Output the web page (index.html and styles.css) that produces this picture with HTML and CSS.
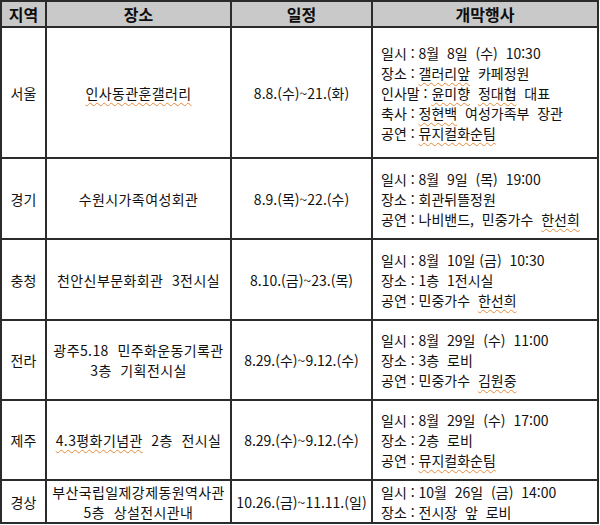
FILE: index.html
```html
<!DOCTYPE html>
<html lang="ko">
<head>
<meta charset="utf-8">
<link rel="stylesheet" href="styles.css">
</head>
<body>
<div class="table">
  <div class="cell head">지역</div>
  <div class="cell head">장소</div>
  <div class="cell head">일정</div>
  <div class="cell head">개막행사</div>

  <div class="cell c">서울</div>
  <div class="cell c loc"><span class="sp">인사동관훈갤러리</span></div>
  <div class="cell c">8.8.(수)~21.(화)</div>
  <div class="cell ev">
    <div>일시 : 8월&nbsp; 8일&nbsp; (수)&nbsp; 10:30</div>
    <div>장소 : <span class="sp">갤러리앞</span>&nbsp; 카페정원</div>
    <div>인사말 : <span class="sp">윤미향</span>&nbsp; <span class="sp">정대협</span>&nbsp; 대표</div>
    <div>축사 : <span class="sp">정현백</span>&nbsp; 여성가족부&nbsp; 장관</div>
    <div>공연 : <span class="sp">뮤지컬화순팀</span></div>
  </div>

  <div class="cell c">경기</div>
  <div class="cell c loc">수원시가족여성회관</div>
  <div class="cell c">8.9.(목)~22.(수)</div>
  <div class="cell ev">
    <div>일시 : 8월&nbsp; 9일&nbsp; (목)&nbsp; 19:00</div>
    <div>장소 : 회관뒤뜰정원</div>
    <div>공연 : 나비밴드,&nbsp; 민중가수&nbsp; <span class="sp">한선희</span></div>
  </div>

  <div class="cell c">충청</div>
  <div class="cell c loc">천안신부문화회관&nbsp; 3전시실</div>
  <div class="cell c">8.10.(금)~23.(목)</div>
  <div class="cell ev">
    <div>일시 : 8월&nbsp; 10일 (금)&nbsp; 10:30</div>
    <div>장소 : 1층&nbsp; 1전시실</div>
    <div>공연 : 민중가수&nbsp; <span class="sp">한선희</span></div>
  </div>

  <div class="cell c">전라</div>
  <div class="cell c loc">
    <div>광주5.18&nbsp; 민주화운동기록관</div>
    <div>3층&nbsp; 기획전시실</div>
  </div>
  <div class="cell c">8.29.(수)~9.12.(수)</div>
  <div class="cell ev">
    <div>일시 : 8월&nbsp; 29일&nbsp; (수)&nbsp; 11:00</div>
    <div>장소 : 3층&nbsp; 로비</div>
    <div>공연 : 민중가수&nbsp; <span class="sp">김원중</span></div>
  </div>

  <div class="cell c">제주</div>
  <div class="cell c loc"><div><span class="sp">4.3평화기념관</span>&nbsp; 2층&nbsp; 전시실</div></div>
  <div class="cell c">8.29.(수)~9.12.(수)</div>
  <div class="cell ev">
    <div>일시 : 8월&nbsp; 29일&nbsp; (수)&nbsp; 17:00</div>
    <div>장소 : 2층&nbsp; 로비</div>
    <div>공연 : <span class="sp">뮤지컬화순팀</span></div>
  </div>

  <div class="cell c">경상</div>
  <div class="cell c loc">
    <div>부산국립일제강제동원역사관</div>
    <div>5층&nbsp; 상설전시관내</div>
  </div>
  <div class="cell c">10.26.(금)~11.11.(일)</div>
  <div class="cell ev">
    <div>일시 : 10월&nbsp; 26일&nbsp; (금)&nbsp; 14:00</div>
    <div>장소 : 전시장&nbsp; 앞&nbsp; 로비</div>
  </div>
</div>
</body>
</html>
```

FILE: styles.css
```css
html, body {
  margin: 0;
  padding: 0;
  background: #ffffff;
}

body {
  font-family: "Noto Sans CJK KR", "Noto Sans", sans-serif;
  color: #111111;
  font-size: 14px;
  line-height: 20px;
}

.table {
  display: grid;
  grid-template-columns: 43px 183px 139px 224px;
  grid-template-rows: 24px 129px 79px 79px 78px 78px 41px;
  gap: 2px;
  padding: 2px;
  background: #2b2b2b;
  width: 595px;
}

.cell {
  background: #ffffff;
  display: flex;
  flex-direction: column;
  justify-content: center;
  overflow: hidden;
}

.head {
  background: #c9c9c9;
  align-items: center;
  font-weight: 700;
  font-size: 16px;
  color: #0d0d0d;
}

.c {
  align-items: center;
  text-align: center;
}

.loc {
  letter-spacing: 0.4px;
  white-space: nowrap;
}

.ev {
  align-items: flex-start;
  padding-left: 8px;
  white-space: nowrap;
}

.sp {
  text-decoration: underline wavy #e58a3a;
  text-decoration-thickness: 1px;
  text-underline-offset: 3px;
}
```
